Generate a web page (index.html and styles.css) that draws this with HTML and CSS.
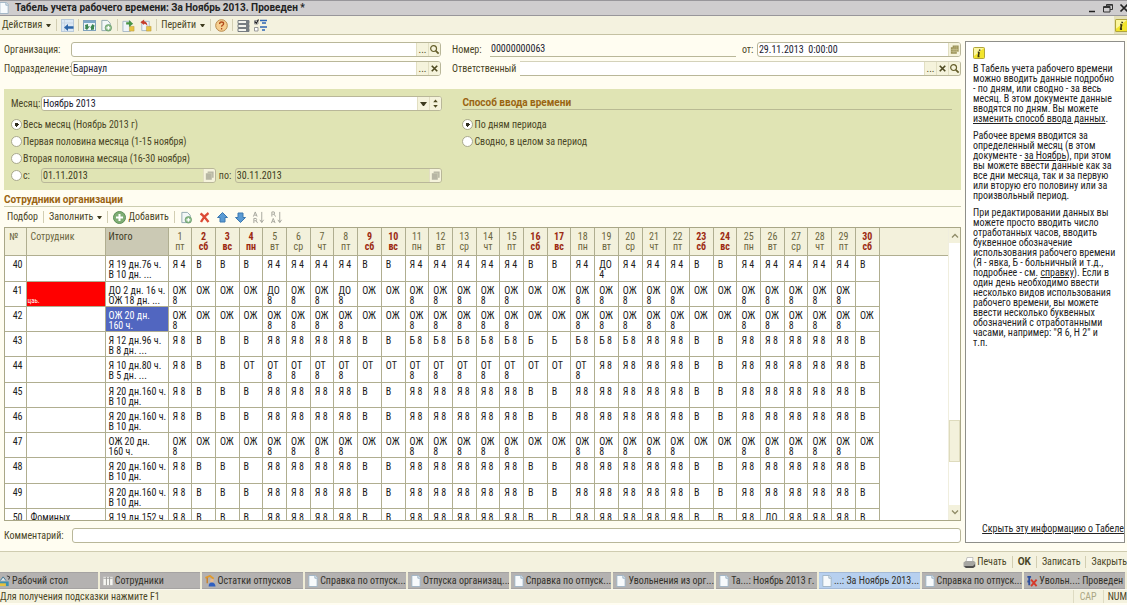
FILE: index.html
```
<!DOCTYPE html>
<html lang="ru">
<head>
<meta charset="utf-8">
<title>Табель учета рабочего времени</title>
<link rel="stylesheet" href="styles.css">
</head>
<body>
<svg class="defs" aria-hidden="true">
  <symbol id="i-doc" viewBox="0 0 12 13"><path d="M1.5.5h7l2 2v10h-9z" fill="#f7fafc" stroke="#9db3c4"/><path d="M8 .5v3h3" fill="#d5e0ea" stroke="#9db3c4"/></symbol>
  <symbol id="i-find" viewBox="0 0 12 12"><circle cx="5" cy="5" r="3.2" fill="none" stroke="#665f2c" stroke-width="1.3"/><path d="M7.5 7.5l3 3" stroke="#665f2c" stroke-width="2"/></symbol>
  <symbol id="i-x" viewBox="0 0 12 12"><path d="M3 3l6 6M9 3l-6 6" stroke="#4e4a22" stroke-width="1.8"/></symbol>
  <symbol id="i-cal" viewBox="0 0 12 12"><path d="M4 1.5h6.5v7H8.5v2H2v-7h2z" fill="#9a9156"/><path d="M4.5 4v6M6.500 2v8M8.500 2v7M2 6h8M2 8h8" stroke="#d8d2a4" stroke-width=".5"/></symbol>
  <symbol id="i-calg" viewBox="0 0 12 12"><path d="M4 1.500h6.500v7h-2v2h-6.500v-7h2z" fill="#b7b6a4"/><path d="M4 3.500h4.500v5" fill="none" stroke="#d9dabc" stroke-width=".6"/></symbol>
  <symbol id="i-copy" viewBox="0 0 13 14"><path d="M1.500 1.500h6l3 3v8h-9z" fill="#f3f7f7" stroke="#8fa6ad"/><circle cx="8.500" cy="9.500" r="3.500" fill="#8fbd8c" stroke="#5c9460" stroke-width=".7"/><path d="M8.500 7.500v4M6.500 9.500h4" stroke="#fff" stroke-width="1.300"/></symbol>
  <symbol id="i-info" viewBox="0 0 12 12"><rect x=".5" y=".5" width="11" height="11" rx="1" fill="#f3e52c" stroke="#b0a53c"/><path d="M1 1h10L1 9z" fill="#fcf7a0"/><path d="M6.800 2.500l-.3 1.300M6.200 5l-1 4.500M4.800 5.200h1.400M4.500 9.400h2" stroke="#3a3510" stroke-width="1.500"/></symbol>
</svg>

<div class="app">
  <header class="title">
    <svg class="ico"><use href="#i-doc"/></svg>
    <h1>Табель учета рабочего времени: За Ноябрь 2013. Проведен *</h1>
    <div class="winbtns">
      <button aria-label="Свернуть"><svg class="ico" viewBox="0 0 12 12"><path d="M3 9.500h6" stroke="#222" stroke-width="1.500"/></svg></button>
      <button aria-label="Восстановить"><svg class="ico" viewBox="0 0 12 12"><path d="M4.500 4V2.500h6v5H8M1.500 4.500h6.500v5.500H1.500zM1.500 5.500h6.500M4.500 3.200h6" fill="none" stroke="#333"/></svg></button>
      <button aria-label="Закрыть окно"><svg class="ico" viewBox="0 0 12 12"><path d="M2.500 2.500l7 7M9.500 2.500l-7 7" stroke="#222" stroke-width="1.700"/></svg></button>
    </div>
  </header>

  <nav class="bar tools">
    <button class="menu">Действия<i class="caret"></i></button><i class="sep"></i>
    <button aria-label="Записать"><svg class="ico" viewBox="0 0 13 13"><rect x=".5" y=".5" width="12" height="12" fill="#dce8f4" stroke="#b9cadb"/><path d="M3.500 1v11M1 4h11" stroke="#c8d6e4"/><path d="M3 8.500l4-3.500v2.300h5.500v2.400H7V12z" fill="#2d65a8"/></svg></button><i class="sep"></i>
    <button aria-label="Обновить"><svg class="ico" viewBox="0 0 13 13"><rect x=".5" y="1.500" width="12" height="10" fill="#eef5f8" stroke="#7fa2bd"/><path d="M1 2h11v2H1z" fill="#7da8c8"/><path d="M2 6l3-1v2.500l2-.5-3 4-2.500-2 1-.5zM11 10.500l-3 .5V8.500l-1 .5 2.500-4L12 7l-1 .5z" fill="#3c8750"/></svg></button>
    <button aria-label="Скопировать"><svg class="ico"><use href="#i-copy"/></svg></button><i class="sep"></i>
    <button aria-label="Провести"><svg class="ico" viewBox="0 0 13 14"><path d="M.5 2.500h8v11h-8z" fill="#f0f5f9" stroke="#a4b7c6"/><path d="M7.500 8h5v5h-5z" fill="#e7c344" stroke="#b7953a" stroke-width=".5"/><path d="M4 3.500h3V1l4.500 4L7 8.500V6H4z" fill="#479345"/></svg></button>
    <button aria-label="Отменить проведение"><svg class="ico" viewBox="0 0 13 14"><path d="M2.500 2.500h8v10h-8z" fill="#f0f5f9" stroke="#a4b7c6"/><path d="M7.500 8h5v5h-5z" fill="#e7c344" stroke="#b7953a" stroke-width=".5"/><path d="M1 3.500L5 .5v2q3.500.5 3.500 5Q7 5 5 5v1.500z" fill="#c63d2b"/></svg></button><i class="sep"></i>
    <button class="menu">Перейти<i class="caret"></i></button><i class="sep"></i>
    <button aria-label="Справка"><svg class="ico" viewBox="0 0 13 13"><circle cx="6.500" cy="6.500" r="5.800" fill="#f6cf90" stroke="#b98a4c"/><path d="M4.600 5q0-2 2-2t2 1.700q0 1-1.100 1.600-.9.500-.9 1.500M6.600 9v1.400" fill="none" stroke="#b04a1c" stroke-width="1.300"/></svg></button><i class="sep"></i>
    <button aria-label="Список"><svg class="ico" viewBox="0 0 13 13"><path d="M1 1.500h11v3H1zM1 5.500h11v3H1zM1 9.500h11v3H1z" fill="#f4f4ee" stroke="#777d82"/><path d="M9 1h3v12H9z" fill="#777d82"/></svg></button>
    <button aria-label="Настройка"><svg class="ico" viewBox="0 0 13 13"><path d="M.5 1.500h3.500v3.500H.5zM.5 8.500h3.500V12H.5z" fill="#fff" stroke="#999"/><path d="M.8 2.500l1.500 1.700L4.500.5" fill="none" stroke="#222" stroke-width="1.200"/><path d="M6 1.500h7M8 4h4M6 8h7M8 11h3" stroke="#2e66b5" stroke-width="1.600"/></svg></button>
    <button class="infobtn" aria-label="Информация"><svg class="ico"><use href="#i-info"/></svg></button>
  </nav>

  <main class="work">
    <section class="form">
      <div class="fields">
        <div class="row"><label class="lab" for="org">Организация:</label><span class="box"><input id="org"><button>...</button><button aria-label="Открыть"><svg class="ico"><use href="#i-find"/></svg></button></span></div>
        <div class="row"><label class="num-lab" for="num">Номер:</label><span class="line"><input id="num" value="00000000063"></span><label class="from" for="date">от:</label><span class="box date"><input id="date" value="29.11.2013  0:00:00"><button aria-label="Календарь"><svg class="ico"><use href="#i-cal"/></svg></button></span></div>
        <div class="row"><label class="lab" for="dep">Подразделение:</label><span class="box"><input id="dep" value="Барнаул"><button>...</button><button aria-label="Очистить"><svg class="ico"><use href="#i-x"/></svg></button></span></div>
        <div class="row"><label class="resp-lab" for="resp">Ответственный</label><span class="box open"><input id="resp"><button>...</button><button aria-label="Очистить"><svg class="ico"><use href="#i-x"/></svg></button><button aria-label="Открыть"><svg class="ico"><use href="#i-find"/></svg></button></span></div>
      </div>

      <div class="period">
        <div class="left">
          <div class="row month"><label for="month">Месяц:</label><span class="box"><input id="month" value="Ноябрь 2013"><button aria-label="Выбрать"><i class="caret big"></i></button><button aria-label="Изменить"><svg class="ico" viewBox="0 0 12 12"><path d="M3.500 4.500L6 1.500l2.500 3zM3.500 7.500L6 10.500l2.500-3z" fill="#4e4a22"/></svg></button></span></div>
          <label class="opt"><input type="radio" name="p" checked>Весь месяц (Ноябрь 2013 г)</label>
          <label class="opt"><input type="radio" name="p">Первая половина месяца (1-15 ноября)</label>
          <label class="opt"><input type="radio" name="p">Вторая половина месяца (16-30 ноября)</label>
          <div class="row range"><label class="opt"><input type="radio" name="p">с:</label><span class="box off"><input aria-label="Начало" value="01.11.2013"><button aria-label="Календарь"><svg class="ico"><use href="#i-calg"/></svg></button></span><label class="to" for="till">по:</label><span class="box off wide"><input id="till" value="30.11.2013"><button aria-label="Календарь"><svg class="ico"><use href="#i-calg"/></svg></button></span></div>
        </div>
        <div class="right">
          <h2>Способ ввода времени</h2>
          <label class="opt"><input type="radio" name="m" checked>По дням периода</label>
          <label class="opt"><input type="radio" name="m">Сводно, в целом за период</label>
        </div>
      </div>

      <h2 class="staff">Сотрудники организации</h2>
      <div class="bar gridtools">
        <button>Подбор</button><i class="sep"></i>
        <button class="menu">Заполнить<i class="caret"></i></button><i class="sep"></i>
        <button class="add"><svg class="ico" viewBox="0 0 13 13"><circle cx="6.500" cy="6.500" r="6" fill="#7fae74" stroke="#5c8f58"/><path d="M6.500 3v7M3 6.500h7" stroke="#fff" stroke-width="2"/></svg>Добавить</button><i class="sep"></i>
        <button aria-label="Скопировать строку"><svg class="ico"><use href="#i-copy"/></svg></button>
        <button aria-label="Удалить"><svg class="ico" viewBox="0 0 13 13"><path d="M2.500 2.500q3 2 8 8.500M10.500 2q-5 3.500-7.500 9" stroke="#dc4a35" stroke-width="2.300" fill="none"/></svg></button>
        <button aria-label="Вверх"><svg class="ico" viewBox="0 0 13 13"><path d="M6.500 1.500l5 5H9v4.500H4V6.500H1.500z" fill="#5a9bd4" stroke="#3d78b0"/></svg></button>
        <button aria-label="Вниз"><svg class="ico" viewBox="0 0 13 13"><path d="M6.500 11.500l5-5H9V2H4v4.500H1.500z" fill="#5a9bd4" stroke="#3d78b0"/></svg></button>
        <button aria-label="По возрастанию"><svg class="ico" viewBox="0 0 13 14"><path d="M1 6l2-5 2 5M2 4.500h2.500M1.500 13V8h2.500q1 1.300 0 2.500H2M4 10.500L5.500 13M10 1v11M8 9.500l2 3 2-3" fill="none" stroke="#a3a39a"/></svg></button>
        <button aria-label="По убыванию"><svg class="ico" viewBox="0 0 13 14"><path d="M1.500 6V1h2.500q1 1.300 0 2.500H2M4 3.500L5.500 6M1 13l2-5 2 5M2 11.500h2.500M10 1v11M8 9.500l2 3 2-3" fill="none" stroke="#a3a39a"/></svg></button>
      </div>

      <div class="grid">
        <div class="view">
          <table>
            <colgroup id="cols"></colgroup>
            <thead><tr id="head"><th class="n">№</th><th class="name">Сотрудник</th><th class="sum">Итого</th></tr></thead>
            <tbody id="rows"></tbody>
          </table>
        </div>
        <div class="scroll">
          <button aria-label="Прокрутить вверх"><svg class="ico" viewBox="0 0 12 12"><path d="M3 7.500l3-3 3 3" fill="none" stroke="#8f8c68" stroke-width="1.300"/></svg></button>
          <i class="before"></i><i class="thumb"></i><i class="after"></i>
          <button aria-label="Прокрутить вниз"><svg class="ico" viewBox="0 0 12 12"><path d="M3 4.500l3 3 3-3" fill="none" stroke="#8f8c68" stroke-width="1.300"/></svg></button>
        </div>
      </div>

      <div class="row comment"><label class="lab" for="com">Комментарий:</label><span class="box plain"><input id="com"></span></div>
    </section>

    <aside class="help">
      <svg class="ico"><use href="#i-info"/></svg>
      <p>В Табель учета рабочего времени можно вводить данные подробно - по дням, или сводно - за весь месяц. В этом документе данные вводятся по дням. Вы можете <a href="#">изменить способ ввода данных</a>.</p>
      <p>Рабочее время вводится за определенный месяц (в этом документе - <a href="#">за Ноябрь</a>), при этом вы можете ввести данные как за все дни месяца, так и за первую или вторую его половину или за произвольный период.</p>
      <p>При редактировании данных вы можете просто вводить число отработанных часов, вводить буквенное обозначение использования рабочего времени (Я - явка, Б - больничный и т.д., подробнее - см. <a href="#">справку</a>). Если в один день необходимо ввести несколько видов использования рабочего времени, вы можете ввести несколько буквенных обозначений с отработанными часами, например: "Я 6, Н 2" и<br>т.п.</p>
      <a class="hide" href="#">Скрыть эту информацию о Табеле</a>
    </aside>
  </main>

  <div class="bar actions">
    <button><svg class="ico" viewBox="0 0 13 13"><path d="M3 6L4 1.500h6L9.500 6z" fill="#fff" stroke="#aaa" stroke-width=".7"/><path d="M.5 6.500L2.500 5h8.500l1.500 1.500v4l-2 1.500h-8l-2-1.500z" fill="#a6a6a2"/><path d="M1 10h9l2-2v2.500l-2 1.500h-7z" fill="#4e4e4c"/></svg>Печать</button><i class="sep"></i>
    <button class="ok">OK</button><i class="sep"></i>
    <button>Записать</button><i class="sep"></i>
    <button>Закрыть</button>
  </div>

  <nav class="tasks">
    <button><svg class="ico" viewBox="0 0 12 13"><path d="M0 7h10v5H0z" fill="#3d8fb0"/><path d="M0 9h7v3H0z" fill="#e6c23f"/><path d="M1 6l3-4 3 4" fill="#dfeaf0" stroke="#37708c"/><path d="M8 1l3 1-1 3" fill="none" stroke="#333"/></svg><span>Рабочий стол</span></button>
    <button><svg class="ico" viewBox="0 0 12 13"><path d="M1 2h10v9H1z" fill="#f6f6f2"/><path d="M4.300 2v9M7.700 2v9M1 3.500h10" stroke="#9a9a98"/></svg><span>Сотрудники</span></button>
    <button><svg class="ico" viewBox="0 0 12 13"><path d="M1 3l5-2 4 3" fill="none" stroke="#e09a2c" stroke-width="2"/><path d="M3 3v6" stroke="#c77f2a" stroke-width="1.500"/><circle cx="8" cy="6" r="2" fill="#e8b98c"/><path d="M4.500 12.500q0-4.500 3.500-4.500t4 4.500z" fill="#2f5fc0"/></svg><span>Остатки отпусков</span></button>
    <button><svg class="ico"><use href="#i-doc"/></svg><span>Справка по отпуск...</span></button>
    <button><svg class="ico"><use href="#i-doc"/></svg><span>Отпуска организац...</span></button>
    <button><svg class="ico"><use href="#i-doc"/></svg><span>Справка по отпуск...</span></button>
    <button><svg class="ico"><use href="#i-doc"/></svg><span>Увольнения из орг...</span></button>
    <button><svg class="ico"><use href="#i-doc"/></svg><span>Та...: Ноябрь 2013 г.</span></button>
    <button class="on"><svg class="ico"><use href="#i-doc"/></svg><span>...: За Ноябрь 2013...</span></button>
    <button><svg class="ico"><use href="#i-doc"/></svg><span>Справка по отпуск...</span></button>
    <button><svg class="ico" viewBox="0 0 12 13"><path d="M1 2h4M3 2v9M1 7h3" stroke="#2d4f9c" stroke-width="2"/><path d="M5 5l6 7M11 5l-6 7" stroke="#d6392a" stroke-width="2"/></svg><span>Увольн...: Проведен</span></button>
  </nav>

  <footer class="status"><span>Для получения подсказки нажмите F1</span><span class="cap">CAP</span><span class="numl">NUM</span></footer>
</div>
<script src="grid.js"></script>
</body>
</html>
```
FILE: styles.css
```
* { box-sizing: border-box; }
body {
  margin: 0;
  background: #fff;
  color: #4a4626;
  font: 10px/12px "Roboto Condensed", Roboto, "Liberation Sans", sans-serif;
}
button, input { font: inherit; color: inherit; }
button {
  display: inline-flex;
  align-items: center;
  margin: 0;
  padding: 0;
  border: 0;
  background: none;
  white-space: nowrap;
}
h1, h2, p { margin: 0; font-size: inherit; }
.defs { display: none; }
.ico { flex: none; display: block; width: 12px; height: 12px; }
.app {
  display: flex;
  flex-direction: column;
  height: 100vh;
  padding-bottom: 2px;
  overflow: hidden;
  background: #fffdf1;
}

/* title */
.title {
  display: flex;
  align-items: center;
  height: 16px;
  border: solid #98969a;
  border-width: 1px 0;
  background: #cfcdce;
  color: #222;
}
.title .ico { margin-left: -2px; }
.title h1 { margin-left: 5px; font-family: Roboto, sans-serif; font-weight: 700; }
.winbtns { display: flex; gap: 4px; margin: 0 -3px 0 auto; }
.winbtns .ico { margin: 0; }

/* toolbars */
.bar { display: flex; align-items: center; flex: none; }
.bar .ico { width: 13px; height: 13px; }
.sep { width: 1px; height: 12px; background: #d2ceb2; }
.caret {
  width: 5px;
  margin-left: 4px;
  border: solid transparent;
  border-width: 3px 2px 0;
  border-top-color: #3d3a1e;
}
.caret.big { width: 7px; margin: 0; border-width: 4px 3px 0; border-top-color: #3d3a1e; }
.tools {
  gap: 4px;
  height: 19px;
  padding-left: 2px;
  border-bottom: 1px solid #c4c1a2;
  background: #f4f2df;
}
.tools .menu { margin-right: 1px; }
.infobtn {
  justify-content: center;
  width: 15px;
  height: 18px;
  margin: 0 -2px 0 auto;
  background: #e4e0b8;
}

/* body */
.work { flex: 1; min-height: 0; display: flex; gap: 4px; padding: 6px 2px 8px 4px; }
.form { flex: 1; min-width: 0; display: flex; flex-direction: column; padding-top: 1px; }
.fields { display: grid; grid-template-columns: 437fr 509fr; gap: 4px 11px; }
.row { display: flex; align-items: center; }
.lab { flex: none; width: 67px; }
.box {
  flex: 1;
  min-width: 0;
  display: flex;
  height: 15px;
  border: 1px solid #b9b799;
  border-radius: 3px;
  background: #fff;
  overflow: hidden;
}
.box input, .line input {
  flex: 1;
  min-width: 0;
  width: 100%;
  padding: 0 1px;
  border: 0;
  background: none;
  color: #1c1c30;
}
.box button {
  flex: none;
  justify-content: center;
  width: 12px;
  background: #f5f3dc;
  border-left: 1px solid #e2dfc2;
  color: #4e4a22;
}
.box .ico { width: 11px; height: 11px; }
.num-lab { width: 38px; }
.line { flex: 247; height: 14px; display: flex; border-bottom: 1px solid #b9b799; }
.line input { padding-bottom: 1px; }
.from { width: 21px; padding-left: 6px; }
.box.date { flex: 203; }
.resp-lab { width: 68px; }
.box.open { border-left: 0; border-radius: 0 3px 3px 0; border-top-color: #d4d2ba; }

.period {
  display: grid;
  grid-template-columns: 431fr 489fr;
  column-gap: 20px;
  margin-top: 13px;
  padding: 7px 9px 6px 7px;
  background: #e0e4b4;
}
.month { margin-bottom: 5px; }
.month label { width: 30px; }
.opt { display: flex; align-items: center; gap: 1px; height: 17px; }
.opt input {
  appearance: none;
  flex: none;
  width: 11px;
  height: 11px;
  margin: 0;
  border: 1px solid #a9a98d;
  border-radius: 50%;
  background: #fff;
}
.opt input:checked { background: radial-gradient(circle, #2f2d20 2px, #fff 2px); }
.range { height: 17px; }
.range .opt { width: 30px; }
.box.off { background: none; flex: 174; }
.box.off input { color: #3d3a1e; }
.box.off.wide { flex: 207; }
.to { width: 19px; padding-left: 3px; }
h2 { font-family: Roboto, sans-serif; font-weight: 700; color: #9a6412; }
.right h2 { height: 14px; margin-bottom: 6px; padding-top: 1px; border-bottom: 1px solid #b9ba93; }
.staff { margin-top: 4px; border-bottom: 1px solid #cccdb0; }
.gridtools { gap: 5px; height: 20px; padding-left: 3px; }
.gridtools .add { gap: 2px; }

/* timesheet */
.grid {
  flex: 1;
  min-height: 0;
  display: flex;
  border: 1px solid #a9a787;
  background: #fff;
}
.view { flex: 1; min-width: 0; overflow: hidden; }
table { width: 100%; border-collapse: collapse; table-layout: fixed; line-height: 10px; }
th, td {
  padding: 4px 0 0 4px;
  border: solid #b0ae90;
  border-width: 0 1px 1px 0;
  vertical-align: top;
  text-align: left;
  font-weight: 400;
  white-space: pre-line;
  overflow: hidden;
}
th { height: 27px; background: #f3f1dc; color: #6b6640; }
th.sum { background: #cbc9b4; color: #3d3a1e; }
th.day { padding-left: 0; text-align: center; }
th.red { color: #9c2a12; font-weight: 700; }
td { height: 25px; color: #1c1c1c; }
tr:nth-child(4n+1) td { height: 26px; }
td.n { padding: 4px 3px 0 0; text-align: right; }
td.sum { padding-left: 3px; white-space: pre; }
th.sum { padding-left: 3px; }
td.rest, th.rest { border-right: 0; }
td.rest { border-bottom: 0; }
td.mark { background: #f00; color: #fff; font-size: 7px; vertical-align: bottom; padding: 0 0 0 1px; }
td.cur { background: #5166c0; color: #fff; }
.c-n { width: 21px; }
.c-name { width: 79px; }
.c-sum { width: 63px; }
.c-day { width: 2.514%; }

.scroll { flex: none; display: flex; flex-direction: column; width: 12px; border-left: 1px solid #f0eede; }
.scroll button { flex: none; justify-content: center; height: 15px; background: #f3f1dc; }
.before { flex: 178; }
.thumb { flex: 40; border: 1px solid #dedbbd; background: #f3f1dc; }
.after { flex: 43; }

.comment { margin-top: 7px; }
.comment .lab { width: 68px; }

/* help */
.help {
  flex: none;
  display: flex;
  flex-direction: column;
  width: 160px;
  padding: 5px 0 8px 7px;
  border: 1px solid #8f8f8a;
  background: #fff;
  color: #222;
  line-height: 10px;
}
.help .ico { margin-bottom: 5px; }
.help p { margin: 0 6px 7px 0; }
a { color: inherit; }
.hide { margin: auto 0 0 auto; white-space: nowrap; }

/* bottom */
.actions { justify-content: flex-end; gap: 5px; height: 21px; border-top: 1px solid #cfccb0; background: #f4f2df; }
.actions button { gap: 1px; }
.actions .ok { font-family: Roboto, sans-serif; font-weight: 700; }
.tasks { flex: none; display: flex; gap: 2px; height: 17px; padding-right: 2px; margin-left: -3px; background: #efecd6; }
.tasks button {
  flex: 1;
  min-width: 0;
  gap: 1px;
  padding: 0 2px;
  border: 1px solid #a5a3a2;
  border-width: 1px 0;
  background: #b4b2b1;
  color: #33312a;
  overflow: hidden;
}
.tasks .on { background: #b7d0ef; border-color: #a3b9d6; }
.status { flex: none; display: flex; height: 14px; line-height: 14px; background: #f4f2df; border-top: 1px solid #fbfaf0; }
.cap { margin-left: auto; padding: 0 6px; border-left: 1px solid #dedbc2; border-right: 1px solid #dedbc2; color: #aaa684; }
.numl { padding: 0 0 0 4px; }
```
FILE: grid.js
```
const week = ['пт', 'сб', 'вс', 'пн', 'вт', 'ср', 'чт'];
const off = new Set([2, 3, 4, 9, 10, 16, 17, 23, 24, 30]);
const days = Array.from({ length: 30 }, (_, i) => i + 1);

// A full month of one work code, with another code on the days off
const month = (work, rest, changes = {}) =>
  days.map(d => d in changes ? changes[d] : off.has(d) ? rest : work);
// The same text on every day from a to b
const span = (a, b, work, rest) =>
  Object.fromEntries(days.filter(d => d >= a && d <= b).map(d => [d, off.has(d) ? rest : work]));

const usual = month('Я 8', 'В');
const care = month('ОЖ\n8', 'ОЖ');
const full = 'Я 20 дн.160 ч.\nВ 10 дн.';
const data = [
  [40, '', 'Я 19 дн.76 ч.\nВ 10 дн. ...', month('Я 4', 'В', { 19: 'ДО\n4' })],
  [41, 'цаь.', 'ДО 2 дн. 16 ч.\nОЖ 18 дн. ...', month('ОЖ\n8', 'ОЖ', { 5: 'ДО\n8', 8: 'ДО\n8', 30: '' })],
  [42, '', 'ОЖ 20 дн.\n160 ч.', care],
  [43, '', 'Я 12 дн.96 ч.\nВ 8 дн. ...', month('Я 8', 'В', span(11, 20, 'Б 8', 'Б'))],
  [44, '', 'Я 10 дн.80 ч.\nВ 5 дн. ...', month('Я 8', 'В', span(4, 18, 'ОТ\n8', 'ОТ'))],
  [45, '', full, usual],
  [46, '', full, usual],
  [47, '', 'ОЖ 20 дн.\n160 ч.', care],
  [48, '', full, usual],
  [49, '', full, usual],
  [50, 'Фоминых', 'Я 19 дн.152 ч.', month('Я 8', 'В', { 26: 'ДО' })],
];

const add = (parent, tag, cls, text = '') => {
  const el = document.createElement(tag);
  el.className = cls;
  el.textContent = text;
  parent.append(el);
  return el;
};

const cols = document.getElementById('cols');
['c-n', 'c-name', 'c-sum', ...days.map(() => 'c-day'), 'c-rest'].forEach(c => add(cols, 'col', c));

const head = document.getElementById('head');
days.forEach(d => add(head, 'th', off.has(d) ? 'day red' : 'day', d + '\n' + week[(d - 1) % 7]));
add(head, 'th', 'rest');

const rows = document.getElementById('rows');
data.forEach(([n, name, sum, cells]) => {
  const tr = add(rows, 'tr', '');
  add(tr, 'td', 'n', n);
  add(tr, 'td', n === 41 ? 'mark' : 'name', name);
  add(tr, 'td', n === 42 ? 'sum cur' : 'sum', sum);
  cells.forEach(c => add(tr, 'td', 'd', c));
  add(tr, 'td', 'rest');
});
```
